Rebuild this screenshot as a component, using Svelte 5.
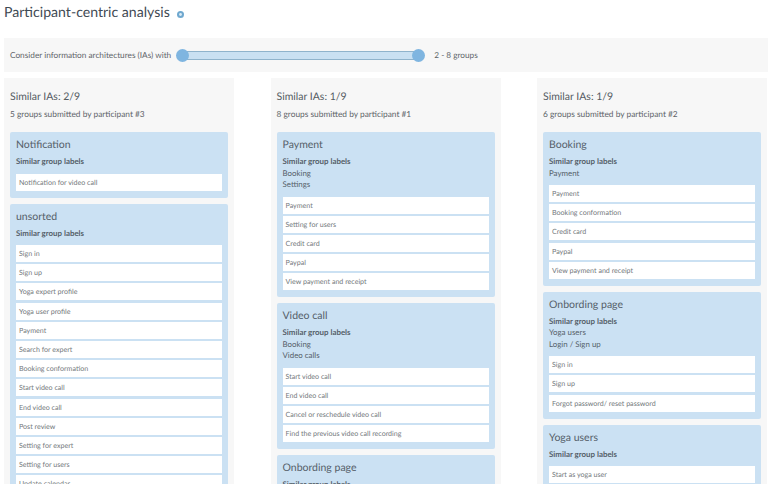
<script>
  const columns = [
    { title: 'Similar IAs: 2/9', sub: '5 groups submitted by participant #3', groups: [
      { name: 'Notification', labels: [], items: ['Notification for video call'] },
      { name: 'unsorted', labels: [], items: ['Sign in','Sign up','Yoga expert profile','Yoga user profile','Payment','Search for expert','Booking conformation','Start video call','End video call','Post review','Setting for expert','Setting for users','Update calendar'] }
    ]},
    { title: 'Similar IAs: 1/9', sub: '8 groups submitted by participant #1', groups: [
      { name: 'Payment', labels: ['Booking','Settings'], items: ['Payment','Setting for users','Credit card','Paypal','View payment and receipt'] },
      { name: 'Video call', labels: ['Booking','Video calls'], items: ['Start video call','End video call','Cancel or reschedule video call','Find the previous video call recording'] },
      { name: 'Onbording page', labels: ['Yoga users'], items: ['Sign in'] }
    ]},
    { title: 'Similar IAs: 1/9', sub: '6 groups submitted by participant #2', groups: [
      { name: 'Booking', labels: ['Payment'], items: ['Payment','Booking conformation','Credit card','Paypal','View payment and receipt'] },
      { name: 'Onbording page', labels: ['Yoga users','Login / Sign up'], items: ['Sign in','Sign up','Forgot password/ reset password'] },
      { name: 'Yoga users', labels: [], items: ['Start as yoga user','Yoga user profile'] }
    ]}
  ];
</script>

<div class="page">
  <h1>Participant-centric analysis<svg class="info" width="7" height="7" viewBox="0 0 7 7"><circle cx="3.5" cy="3.5" r="3.5" fill="#6fa8cf"/><circle cx="3.5" cy="3.5" r="1.4" fill="#dcebf5"/></svg></h1>
  <div class="filter">
    <span>Consider information architectures (IAs) with</span>
    <div class="slider"><i class="knob"></i><div class="track"></div><i class="knob"></i></div>
    <span>2 - 8 groups</span>
  </div>
  <div class="cols">
    {#each columns as col}
      <section class="col">
        <h2>{col.title}</h2>
        <p class="sub">{col.sub}</p>
        {#each col.groups as g}
          <div class="card">
            <h3>{g.name}</h3>
            <div class="labels">
              <b>Similar group labels</b>
              {#each g.labels as l}<span>{l}</span>{/each}
            </div>
            <ul>
              {#each g.items as it}<li>{it}</li>{/each}
            </ul>
          </div>
        {/each}
      </section>
    {/each}
  </div>
</div>

<style>
  :global(body) { margin: 0; background: #fff; }
  .page { width: 768px; height: 484px; overflow: hidden; font-family: Lato, "Open Sans", sans-serif; color: #555c63; box-sizing: border-box; padding-left: 4px; text-rendering: geometricPrecision; }
  h1 { margin: 0; height: 38px; font-size: 14.1px; font-weight: 400; line-height: 25px; color: #3f4a54; }
  .info { margin-left: 7px; vertical-align: -1px; }
  .filter { height: 34px; background: #f7f7f7; display: flex; align-items: center; padding-left: 6px; font-size: 8.25px; color: #5e6469; }
  .slider { display: flex; align-items: center; margin: 0 9px 0 5px; width: 249px; }
  .knob { width: 13px; height: 13px; border-radius: 50%; background: #7fb5e0; flex: none; position: relative; z-index: 1; }
  .track { flex: 1; height: 7px; margin: 0 -4px; background: #c9e0f2; border: 1px solid #8fb3cc; }
  .cols { display: grid; grid-template-columns: repeat(3, 230px); column-gap: 36.5px; margin-top: 6px; align-items: start; }
  .col { background: #f7f7f7; padding: 12px 6px 0; height: 420px; box-sizing: border-box; }
  h2 { margin: 0; font-size: 10.5px; font-weight: 400; line-height: 14px; color: #555c63; }
  .sub { margin: 3px 0 0; font-size: 8.35px; line-height: 14px; height: 25px; color: #5e6469; }
  .card { background: #cbe1f3; border-radius: 2px; padding: 6px 6px 7px; margin-bottom: 6px; }
  h3 { margin: 0; font-size: 10.5px; font-weight: 400; line-height: 14px; color: #555f69; }
  .labels { display: flex; flex-direction: column; margin-top: 4px; font-size: 7.9px; line-height: 11.5px; color: #555f69; }
  .labels b { font-weight: 700; }
  ul { list-style: none; margin: 6px 0 0; padding: 0; display: flex; flex-direction: column; gap: 2.2px; }
  li { background: #fff; height: 17px; line-height: 17px; padding-left: 3px; font-size: 7.1px; color: #74797d; }
</style>
